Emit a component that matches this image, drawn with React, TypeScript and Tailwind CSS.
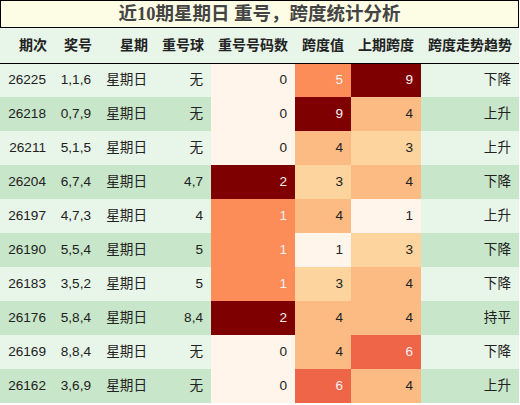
import React from 'react';

type Row = {
  issue: string;
  nums: string;
  day: string;
  repeat: string;
  repeatCount: number;
  span: number;
  prevSpan: number;
  trend: string;
};

const rows: Row[] = [
  { issue: '26225', nums: '1,1,6', day: '星期日', repeat: '无', repeatCount: 0, span: 5, prevSpan: 9, trend: '下降' },
  { issue: '26218', nums: '0,7,9', day: '星期日', repeat: '无', repeatCount: 0, span: 9, prevSpan: 4, trend: '上升' },
  { issue: '26211', nums: '5,1,5', day: '星期日', repeat: '无', repeatCount: 0, span: 4, prevSpan: 3, trend: '上升' },
  { issue: '26204', nums: '6,7,4', day: '星期日', repeat: '4,7', repeatCount: 2, span: 3, prevSpan: 4, trend: '下降' },
  { issue: '26197', nums: '4,7,3', day: '星期日', repeat: '4', repeatCount: 1, span: 4, prevSpan: 1, trend: '上升' },
  { issue: '26190', nums: '5,5,4', day: '星期日', repeat: '5', repeatCount: 1, span: 1, prevSpan: 3, trend: '下降' },
  { issue: '26183', nums: '3,5,2', day: '星期日', repeat: '5', repeatCount: 1, span: 3, prevSpan: 4, trend: '下降' },
  { issue: '26176', nums: '5,8,4', day: '星期日', repeat: '8,4', repeatCount: 2, span: 4, prevSpan: 4, trend: '持平' },
  { issue: '26169', nums: '8,8,4', day: '星期日', repeat: '无', repeatCount: 0, span: 4, prevSpan: 6, trend: '下降' },
  { issue: '26162', nums: '3,6,9', day: '星期日', repeat: '无', repeatCount: 0, span: 6, prevSpan: 4, trend: '上升' },
];

// OrRd-like heat classes
const repeatCls: Record<number, string> = {
  0: 'bg-[#fff5eb] text-[#222]',
  1: 'bg-[#fc8d59] text-[#f1f1f1]',
  2: 'bg-[#7f0000] text-[#f1f1f1]',
};

const spanCls: Record<number, string> = {
  1: 'bg-[#fff5eb] text-[#222]',
  3: 'bg-[#fdd49e] text-[#222]',
  4: 'bg-[#fdbb84] text-[#222]',
  5: 'bg-[#fc8d59] text-[#f1f1f1]',
  6: 'bg-[#ef6548] text-[#f1f1f1]',
  9: 'bg-[#7f0000] text-[#f1f1f1]',
};

const headers = ['期次', '奖号', '星期', '重号球', '重号号码数', '跨度值', '上期跨度', '跨度走势趋势'];
const widths = ['w-[54px]', 'w-[45px]', 'w-[56px]', 'w-[56px]', 'w-[84px]', 'w-[56px]', 'w-[70px]', 'w-[98px]'];

const App: React.FC = () => {
  return (
    <div className="w-[520px] h-[405px] bg-white font-['Liberation_Sans','Noto_Sans_CJK_SC',sans-serif] text-[#222]">
      <div className="w-[519px] h-[28px] border border-black bg-[#fdfde6] flex items-center justify-center">
        <span className="font-['Liberation_Serif','Noto_Sans_CJK_SC',serif] font-bold text-[18.5px] text-[#444] leading-none">
          近10期星期日 重号，跨度统计分析
        </span>
      </div>
      <table className="table-fixed border-collapse w-[519px]">
        <colgroup>
          {widths.map((w, i) => (
            <col key={i} className={w} />
          ))}
        </colgroup>
        <thead>
          <tr className="h-[35px] bg-[#e8f5e9] border-b border-black">
            {headers.map((h) => (
              <th key={h} className="text-right pr-[7px] text-[14px] font-bold whitespace-nowrap">
                {h}
              </th>
            ))}
          </tr>
        </thead>
        <tbody>
          {rows.map((r, i) => {
            const bg = i % 2 === 0 ? 'bg-[#e8f5e9]' : 'bg-[#c8e6c9]';
            const cell = 'text-right pr-[8px] text-[13.6px] whitespace-nowrap';
            return (
              <tr key={r.issue} className="h-[34px]">
                <td className={`${cell} ${bg}`}>{r.issue}</td>
                <td className={`${cell} ${bg}`}>{r.nums}</td>
                <td className={`${cell} ${bg}`}>{r.day}</td>
                <td className={`${cell} ${bg}`}>{r.repeat}</td>
                <td className={`${cell} ${repeatCls[r.repeatCount]}`}>{r.repeatCount}</td>
                <td className={`${cell} ${spanCls[r.span]}`}>{r.span}</td>
                <td className={`${cell} ${spanCls[r.prevSpan]}`}>{r.prevSpan}</td>
                <td className={`${cell} ${bg}`}>{r.trend}</td>
              </tr>
            );
          })}
        </tbody>
      </table>
    </div>
  );
};

export default App;
